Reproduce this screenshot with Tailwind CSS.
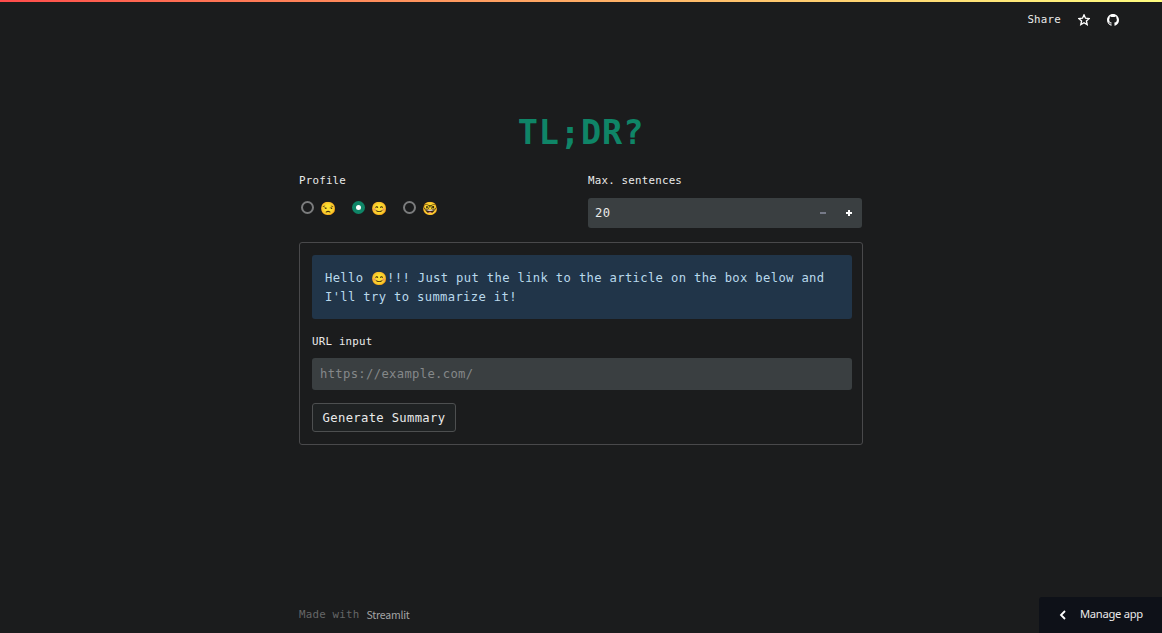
<!DOCTYPE html>
<html lang="en">
<head>
<meta charset="utf-8">
<title>TL;DR?</title>
<script src="https://cdn.jsdelivr.net/npm/@tailwindcss/browser@4"></script>
</head>
<body class="flex h-screen flex-col overflow-hidden bg-[#1b1c1d] font-['DejaVu_Sans_Mono',monospace] text-[12.2px] tracking-[0.336px] text-[#eaeaea]">
<div class="h-0.5 shrink-0 bg-linear-to-r from-[#ff4b4b] to-[#fffd80]"></div>
<header class="flex h-[35px] shrink-0 items-center justify-end pr-[43px]">
  <span class="text-[10.8px] leading-4 tracking-[0.22px]">Share</span>
  <svg class="mt-px ml-[17px] size-3" viewBox="0 0 12 12" fill="none" stroke="#fff" stroke-width="1.35" stroke-linejoin="miter"><path d="M6 .9 7.5 4.2l3.6.4-2.7 2.4.8 3.6L6 8.7l-3.2 1.9.8-3.6L.9 4.6l3.6-.4Z"/></svg>
  <svg class="mt-px ml-[17px] size-3" viewBox="0 0 16 16" fill="#fff"><path d="M8 0C3.58 0 0 3.58 0 8c0 3.54 2.29 6.53 5.47 7.59.4.07.55-.17.55-.38 0-.19-.01-.82-.01-1.49-2.01.37-2.53-.49-2.69-.94-.09-.23-.48-.94-.82-1.13-.28-.15-.68-.52-.01-.53.63-.01 1.08.58 1.23.82.72 1.21 1.87.87 2.33.66.07-.52.28-.87.51-1.07-1.78-.2-3.64-.89-3.64-3.95 0-.87.31-1.59.82-2.15-.08-.2-.36-1.02.08-2.12 0 0 .67-.21 2.2.82a7.6 7.6 0 0 1 4 0c1.53-1.04 2.2-.82 2.2-.82.44 1.1.16 1.92.08 2.12.51.56.82 1.27.82 2.15 0 3.07-1.87 3.75-3.65 3.95.29.25.54.73.54 1.48 0 1.07-.01 1.93-.01 2.2 0 .21.15.46.55.38A8 8 0 0 0 16 8c0-4.42-3.58-8-8-8Z"/></svg>
</header>
<main class="mx-auto flex w-[564px] grow flex-col pt-[73px]">
  <h1 class="h-[46px] text-center text-[33.5px] leading-[46px] font-bold tracking-[0.95px] text-[#0f8567]">TL;DR?</h1>
  <div class="mt-4 flex h-[70px]">
    <div class="w-[289px]">
      <div class="h-4 text-[10.8px] leading-[17px] tracking-[0.22px]">Profile</div>
      <div class="mt-[11px] flex h-4 items-center tracking-normal">
        <span class="ml-0.5 size-[13px] rounded-full border-2 border-[#7b7c7d]"></span><span class="mt-1 ml-1.5 w-8 text-[13px] leading-4">😒</span>
        <span class="flex size-[13px] items-center justify-center rounded-full bg-[#0f8567]"><span class="size-[5px] rounded-full bg-white"></span></span><span class="mt-1 ml-1.5 w-8 text-[13px] leading-4">😊</span>
        <span class="size-[13px] rounded-full border-2 border-[#7b7c7d]"></span><span class="mt-1 ml-1.5 text-[13px] leading-4">🤓</span>
      </div>
    </div>
    <div class="w-[274px]">
      <div class="h-4 text-[10.8px] leading-[17px] tracking-[0.22px]">Max. sentences</div>
      <div class="mt-2.5 flex h-[30px] items-center rounded-[3px] bg-[#3a3f41] px-[7px]">
        <span class="grow leading-5">20</span>
        <span class="mr-5 h-0.5 w-1.5 bg-[#767a88]"></span>
        <svg class="mr-[3px] size-1.5" viewBox="0 0 6 6" fill="#fff"><path d="M2 0h2v2h2v2H4v2H2V4H0V2h2Z"/></svg>
      </div>
    </div>
  </div>
  <section class="flex h-[203px] flex-col rounded-[3px] border border-[#49494b] px-3 pt-3">
    <div class="h-16 w-[540px] rounded-[3px] bg-[#213549] px-[13px] pt-[14px] leading-[19px] whitespace-nowrap text-[#b9d9ec]">
      <p class="flex h-[19px] whitespace-pre"><span>Hello </span><span class="w-4 text-[13px] tracking-normal">😊</span><span>!!! Just put the link to the article on the box below and</span></p>
      <p>I'll try to summarize it!</p>
    </div>
    <div class="mt-3.5 h-4 text-[10.8px] leading-[17px] tracking-[0.22px]">URL input</div>
    <div class="mt-[9px] flex h-8 w-[540px] items-center rounded-[3px] bg-[#3a3f41] px-2 pt-px text-[#858889]">https://example.com/</div>
    <button class="mt-[13px] flex h-[29px] w-36 items-center justify-center rounded-[3px] border border-[#4d4f50] bg-[#1f2223] pt-px">Generate Summary</button>
  </section>
</main>
<footer class="flex h-9 shrink-0 items-end justify-between pl-[299px]">
  <div class="flex h-9 items-center text-[10.8px] leading-4 tracking-[0.22px] text-[#656667]">Made with<span class="ml-[7px] font-['Noto_Sans_CJK_SC',sans-serif] text-[10.5px] tracking-[-0.02em] text-[#a4a4a5]">Streamlit</span></div>
  <div class="flex h-9 w-[123px] items-center rounded-tl-[3px] bg-[#0e1118] pl-5 font-['Noto_Sans',sans-serif] text-[11.2px] tracking-[-0.025em]">
    <svg class="h-2.5 w-[7px]" viewBox="0 0 7 10" fill="none" stroke="#fff" stroke-width="1.8"><path d="M6 1 2 5l4 4"/></svg><span class="-mt-0.5 ml-[14px]">Manage app</span>
  </div>
</footer>
</body>
</html>
